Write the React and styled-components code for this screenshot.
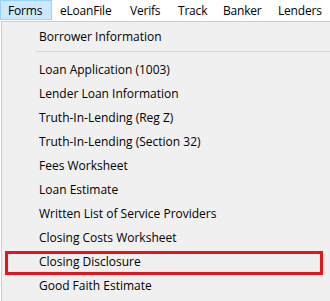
import React from 'react';
import styled, { createGlobalStyle } from 'styled-components';

const Global = createGlobalStyle`
  html, body {
    margin: 0;
    padding: 0;
    background: #fff;
    overflow: hidden;
  }
  body {
    font-family: 'Open Sans', 'Noto Sans', sans-serif;
    font-size: 12px;
    color: #000;
  }
`

const Window = styled.div`
  width: 330px;
  height: 301px;
  display: flex;
  flex-direction: column;
  overflow: hidden;
`

const MenuBar = styled.nav`
  display: flex;
  height: 21px;
  background: #fff;
  flex-shrink: 0;
`

const MenuTitle = styled.div`
  box-sizing: border-box;
  width: ${p => p.w}px;
  flex-shrink: 0;
  height: 20px;
  padding-left: 7px;
  display: flex;
  align-items: center;
  border: 1px solid ${p => p.open ? '#99d1ff' : 'transparent'};
  background: ${p => p.open ? '#cce8ff' : 'transparent'};
  white-space: nowrap;
  letter-spacing: -0.2px;
`

const Dropdown = styled.div`
  flex: 1;
  margin-left: 1px;
  padding-top: 2px;
  background: #f0f0f0;
  border-left: 1px solid #cccccc;
  border-top: 1px solid #cccccc;
`

const Item = styled.div`
  position: relative;
  height: 24px;
  padding-left: 37px;
  display: flex;
  align-items: center;
  white-space: nowrap;

  ${p => p.marked && `
    &::after {
      content: '';
      position: absolute;
      left: 3px;
      right: 7px;
      top: 2px;
      bottom: -2px;
      border: 3px solid #e8141c;
    }
  `}
`

const Separator = styled.div`
  height: 1px;
  margin: 3px 0 5px 33px;
  background: #d7d7d7;
`

const titles = [
  { name: 'Forms', w: 52 },
  { name: 'eLoanFile', w: 70 },
  { name: 'Verifs', w: 48 },
  { name: 'Track', w: 45 },
  { name: 'Banker', w: 55 },
  { name: 'Lenders', w: 60 },
];

const forms = [
  'Loan Application (1003)',
  'Lender Loan Information',
  'Truth-In-Lending (Reg Z)',
  'Truth-In-Lending (Section 32)',
  'Fees Worksheet',
  'Loan Estimate',
  'Written List of Service Providers',
  'Closing Costs Worksheet',
  'Closing Disclosure',
  'Good Faith Estimate',
];

const App = () => {
  return (
    <Window>
      <Global />
      <MenuBar>
        {titles.map((t, i) => (
          <MenuTitle key={t.name} w={t.w} open={i === 0}>{t.name}</MenuTitle>
        ))}
      </MenuBar>
      <Dropdown>
        <Item>Borrower Information</Item>
        <Separator />
        {forms.map(f => (
          <Item key={f} marked={f === 'Closing Disclosure'}>{f}</Item>
        ))}
      </Dropdown>
    </Window>
  )
}

export default App;
